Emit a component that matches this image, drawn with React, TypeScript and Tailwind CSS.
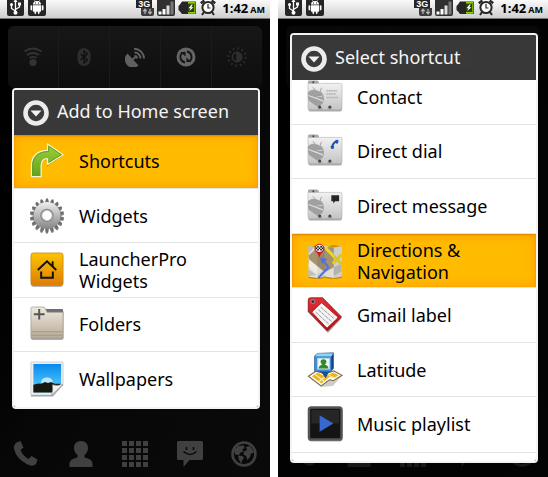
import type { ReactNode } from "react";

type Item = { label: string; icon: ReactNode; selected?: boolean };

/* ---------- status bar ---------- */

function UsbIcon() {
  return (
    <svg viewBox="0 0 17 16" className="h-4 w-[17px]" aria-hidden="true">
      <rect width="17" height="19" y="-3" rx="2" fill="#262626" />
      <g stroke="#fff" strokeWidth="1.300" fill="none">
        <path d="M8.500 0v13M8.500 11L4.500 8.500V5M8.500 9.500L12.500 7V4" />
      </g>
      <circle cx="8.500" cy="12.800" r="2" fill="#fff" />
      <circle cx="4.500" cy="4.600" r="1.500" fill="#fff" />
      <path d="M11 2.500h3v3h-3zM6.500 2L8.500-1l2 3z" fill="#fff" />
    </svg>
  );
}

function DroidIcon() {
  return (
    <svg viewBox="0 0 18 16" className="h-4 w-[18px]" aria-hidden="true">
      <rect width="18" height="19" y="-3" rx="2" fill="#262626" />
      <path d="M5 4.500a4 3.600 0 018 0zM4.800 5.300h8.400v5.500a1 1 0 01-1 1H5.800a1 1 0 01-1-1z" fill="#fff" />
      <path d="M3.300 6v3.600M14.700 6v3.600M7.300 11v2.200M10.700 11v2.200" stroke="#fff" strokeWidth="1.600" strokeLinecap="round" />
      <path d="M6.500.3l1 1.500M11.500.3l-1 1.500" stroke="#fff" strokeWidth=".7" />
      <path d="M7 3h1M10 3h1" stroke="#262626" />
    </svg>
  );
}

function NetworkIcon() {
  return (
    <span className="flex h-4 w-[18px] flex-col">
      <span className="h-2 w-4 bg-[#262626] text-center font-['Liberation_Sans',sans-serif] text-[9px] font-bold leading-[8px] text-white">3G</span>
      <svg viewBox="0 0 18 8" className="block h-2 w-[18px]" aria-hidden="true">
        <path d="M5 0h13v6a2 2 0 01-2 2H7a2 2 0 01-2-2z" fill="#3c3c3c" />
        <path d="M9 6V1.500M7.300 3.300L9 1.300l1.700 2M14 1v4.500M12.300 3.800l1.700 2 1.700-2" stroke="#bbb" strokeWidth="1.200" fill="none" />
      </svg>
    </span>
  );
}

function SignalIcon() {
  return (
    <svg viewBox="0 0 18 16" className="h-4 w-[18px]" aria-hidden="true">
      <rect width="18" height="19" y="-3" rx="2" fill="#303030" />
      <path d="M1.500 11.500h3v3h-3zM5.500 9h3v5.500h-3z" fill="#fff" />
      <path d="M9.500 5.500h3v9h-3z" fill="#ddd" />
      <path d="M13.500 1.500h3v13h-3z" fill="#777" />
    </svg>
  );
}

function BatteryIcon() {
  return (
    <svg viewBox="0 0 19 16" className="h-4 w-[19px]" aria-hidden="true">
      <path d="M4 1.500h14v12.500H4L2 11.500.5 10V6L2 4.500z" fill="#262626" />
      <path d="M10 1.800h7.500v2H10zM10 11.800h7.500v2H10z" fill="#8ccf0a" />
      <path d="M10 3.800h7.500v8H10z" fill="#2f3f14" />
      <path d="M16 3.800h1.500v8H16z" fill="#6fae05" />
      <path d="M13.500 4.500L10.500 8.200h2l-1.200 2.800L15.500 7.200h-2.200l1.500-2.700z" fill="#fff" />
    </svg>
  );
}

function AlarmIcon() {
  return (
    <svg viewBox="0 0 16 16" className="h-4 w-4" aria-hidden="true" fill="none" stroke="#262626">
      <circle cx="8" cy="7.500" r="5.600" strokeWidth="2" fill="#fff" />
      <path d="M8 4v4h2.500" strokeWidth="1.200" />
      <path d="M.8 3.300L4.300.5M15.200 3.300L11.700.5" strokeWidth="2.400" />
      <path d="M4 12l-2 3M12 12l2 3" strokeWidth="2" />
    </svg>
  );
}

function StatusBar() {
  return (
    <header className="flex h-[19px] shrink-0 items-start border-b border-[#777] bg-linear-to-b from-[#fafafa] to-[#cfcfcf] pl-[7px] pr-[5px] text-black">
      <div className="flex gap-1">
        <UsbIcon />
        <DroidIcon />
      </div>
      <div className="ml-auto flex gap-[3px]">
        <NetworkIcon />
        <SignalIcon />
        <BatteryIcon />
        <AlarmIcon />
        <time className="ml-[3px] flex items-baseline gap-[2px] font-['Open_Sans','Noto_Sans',sans-serif] text-[13px] font-bold leading-4">
          1:42<span className="text-[9px]">AM</span>
        </time>
      </div>
    </header>
  );
}

/* ---------- home screen ---------- */

const toggles: { label: string; tone: string; art: ReactNode }[] = [
  {
    label: "Wi-Fi",
    tone: "text-[#333]",
    art: (
      <g fill="none" stroke="currentColor" strokeWidth="1.800">
        <path d="M1.500 4.500q8.500-6 17 0M4 8q6-4 12 0M6.500 11q3.500-2.300 7 0" />
        <circle cx="10" cy="15.500" r="3.600" fill="currentColor" stroke="none" />
      </g>
    ),
  },
  {
    label: "Bluetooth",
    tone: "text-[#2e2e2e]",
    art: (
      <g>
        <rect x="3.500" y="1" width="13" height="18" rx="6.500" fill="currentColor" />
        <path d="M6.500 7l7 6-3.500 3V4l3.500 3-7 6" fill="none" stroke="#111" strokeWidth="1.400" />
      </g>
    ),
  },
  {
    label: "GPS",
    tone: "text-[#606060]",
    art: (
      <g fill="none" stroke="currentColor" strokeWidth="1.900">
        <path d="M2.500 6.500a8 8 0 0011 12z" fill="currentColor" stroke="none" />
        <path d="M9.500 9a2.500 2.500 0 012.500 2.500M9.500 5.500a6 6 0 016 6M9 1.800a9.800 9.800 0 0110 9.800M7.500 12.500l3-2.500" />
      </g>
    ),
  },
  {
    label: "Sync",
    tone: "text-[#666]",
    art: (
      <g>
        <circle cx="10" cy="10" r="9.500" fill="currentColor" />
        <path d="M9 15.500A5.700 5.700 0 016 6M11 4.500A5.700 5.700 0 0114 14" fill="none" stroke="#151515" strokeWidth="1.800" />
        <path d="M4.500 5h5v4.500zM15.500 15h-5v-4.500z" fill="#151515" />
      </g>
    ),
  },
  {
    label: "Brightness",
    tone: "text-[#2e2e2e]",
    art: (
      <g fill="none" stroke="currentColor" strokeWidth="1.600">
        <circle cx="10" cy="10" r="4.600" />
        <path d="M10 5.400a4.600 4.600 0 010 9.200z" fill="currentColor" />
        <circle cx="10" cy="10" r="8.600" strokeWidth="2.400" strokeDasharray="1.600 2.903" />
      </g>
    ),
  },
];

const dock: { label: string; art: ReactNode }[] = [
  {
    label: "Phone",
    art: <path d="M3.500 1.500l4-1.500 3 6.500-3 2.500q2.500 6 8 9l3-3 6 3.500-1.500 4.500q-3 3-8.500.5Q3.500 18 1 8 .5 3.500 3.500 1.500z" />,
  },
  {
    label: "Contacts",
    art: <path d="M13 0c4.500 0 7 3 7 7 0 3-1.500 5.500-3.500 7v2.500q8 1.500 8 6V26h-23v-3.500q0-4.500 8-6V14C7.500 12.500 6 10 6 7c0-4 2.500-7 7-7z" />,
  },
  {
    label: "Applications",
    art: <path d="M0 0h5v5H0zM7 0h5v5H7zM14 0h5v5h-5zM21 0h5v5h-5zM0 7h5v5H0zM7 7h5v5H7zM14 7h5v5h-5zM21 7h5v5h-5zM0 14h5v5H0zM7 14h5v5H7zM14 14h5v5h-5zM21 14h5v5h-5zM0 21h5v5H0zM7 21h5v5H7zM14 21h5v5h-5zM21 21h5v5h-5z" />,
  },
  {
    label: "Messages",
    art: (
      <g>
        <path d="M1.500 0h23a1.500 1.500 0 011.500 1.500v16a1.500 1.500 0 01-1.500 1.500H12.500L6.500 26v-7h-5A1.500 1.500 0 010 17.500v-16A1.500 1.500 0 011.500 0z" />
        <path d="M9.500 6v3M16.500 6v3M6.500 10.500q6.500 6 13 0" stroke="#0a0a0a" strokeWidth="1.600" fill="none" />
      </g>
    ),
  },
  {
    label: "Browser",
    art: (
      <g>
        <circle cx="13" cy="13" r="11.500" fill="none" stroke="currentColor" strokeWidth="2.600" />
        <path d="M3 9l4-4 6-.5.5 2.500-2.500 1.500 1.500 2-3 1-1.500 2.500-4-.5zM7 14.500l4.500.5 1.500 2-2 2.500-.5 3-2.500-3.500zM15 6l4-1 4 6-1.500 1.500L20 12l-1 4-2.500 3-1.500-4-2.500-1.500.5-3 3-1.500z" />
      </g>
    ),
  },
];

function HomeScreen({ faded }: { faded?: boolean }) {
  return (
    <div className={`flex flex-1 flex-col justify-between bg-linear-to-br from-black via-[#070707] to-[#0a0a0a] px-2 pb-[10px] pt-[7px] ${faded ? "opacity-40" : ""}`}>
      <div className="flex h-[62px] divide-x divide-[#1b1b1b] rounded-md bg-linear-to-b from-[#171717] to-[#0e0e0e]">
        {toggles.map((t) => (
          <button key={t.label} type="button" aria-label={t.label} className={`flex flex-1 items-center justify-center ${t.tone}`}>
            <svg viewBox="0 0 20 20" className="h-5 w-5" aria-hidden="true">{t.art}</svg>
          </button>
        ))}
      </div>
      <nav className="flex justify-between px-[5px] text-[#404040]">
        {dock.map((d) => (
          <button key={d.label} type="button" aria-label={d.label}>
            <svg viewBox="0 0 26 26" className="block h-[26px] w-[26px]" fill="currentColor" aria-hidden="true">{d.art}</svg>
          </button>
        ))}
      </nav>
    </div>
  );
}

/* ---------- list icons ---------- */

const shortcutIcon = (
  <g>
    <path d="M2.500 35V25C2.500 15 9 9 18 9V2.500L34 13 18 24v-6.500c-4 0-6.500 3-6.500 7.500v10z" fill="#8a5a00" opacity=".5" />
    <path d="M2 34.500V23C2 13 9 7.500 18.500 7.500V1L34.500 12 18.500 22v-6c-4.500 0-6.500 3-6.500 7.500v11z" fill="url(#leaf)" stroke="#f4f2d8" strokeWidth="1.300" strokeLinejoin="round" />
    <path d="M3.300 33.500V23C3.300 14 10 8.800 19.700 8.800V3.300L32.800 12l-13 8" stroke="#5c9c1c" strokeWidth=".9" fill="none" />
  </g>
);

const teeth = Array.from({ length: 18 }, (_, i) => i * 20);

const gearIcon = (
  <g>
    <g fill="#666" opacity=".8">
      {teeth.map((a) => (
        <path key={a} d="M16.300 6L17 1.800h2.200L19.800 6z" transform={`rotate(${a} 18 19.200)`} />
      ))}
    </g>
    <g fill="#6f6f6f">
      {teeth.map((a) => (
        <path key={a} d="M15.800 6L17 .5h2L20.200 6z" transform={`rotate(${a} 18 18)`} />
      ))}
    </g>
    <circle cx="18" cy="18" r="13.800" fill="url(#steel)" />
    <circle cx="18" cy="18" r="7" fill="#8b8b8b" />
    <circle cx="18" cy="18" r="5.200" fill="#fff" stroke="#c9c9c9" />
  </g>
);

const launcherIcon = (
  <g>
    <rect x="1.500" y="2" width="33" height="34" rx="2.500" fill="#888" opacity=".6" />
    <rect x="1.500" y="1" width="33" height="33.500" rx="2.500" fill="url(#amber)" stroke="#c9860f" strokeWidth=".8" />
    <path d="M8.500 18.500L18 9.500l9.500 9M23.800 9.500v5M12 20v6.500h12V20" fill="none" stroke="#111" strokeWidth="2" />
  </g>
);

const folderIcon = (
  <g>
    <path d="M2 3q0-1.500 1.500-1.500h12L18 5h16q1 0 1 1v27q0 2-2 2H3q-1.500 0-1.500-2z" fill="#777" opacity=".6" />
    <path d="M16 3h17.500q1 0 1 1v5H18z" fill="#6b6e78" />
    <path d="M1.500 2.500Q1.500 1 3 1h11q1.500 0 2.500 2l1.500 3.500h16.500V33H1.500z" fill="url(#sand)" stroke="#9d9789" strokeWidth=".7" />
    <path d="M2 26.500h32M2 30h32" stroke="#9c8f7b" strokeWidth=".8" />
    <path d="M10 3v11M4.500 8.500h11" stroke="#555" strokeWidth="2" />
  </g>
);

const wallpaperIcon = (
  <g>
    <path d="M1.500 2h33v23L24 36.500H1.500z" fill="#777" opacity=".7" />
    <path d="M1.500 1h33v23L23.500 35h-22z" fill="#eee" stroke="#bbb" strokeWidth=".6" />
    <path d="M4 3h28.500v20.500l-9 9H4z" fill="url(#sky)" />
    <ellipse cx="18" cy="21.500" rx="6" ry="4.500" fill="#e2faff" opacity=".75" />
    <path d="M4 24.500l5-1.500 3 .5 4-2 3 1 3-1 4 2 6.500 0-9 9H4z" fill="#17180f" />
    <path d="M22.500 35q2-4 1.200-10.500 5 1.500 10.800-.5z" fill="#f4f4f4" stroke="#999" strokeWidth=".7" />
  </g>
);

const card = (
  <g>
    <path d="M1 5.500q0-1.500 1.500-1.500h7q1.500 0 2 2H34q1.500 0 1.500 1.500V31q0 2.300-2 2.300H2.500Q1 33.300 1 31.500z" fill="#666" opacity=".55" />
    <path d="M.500 3Q.500 1.500 2 1.500h8q1.500 0 2 3H.500z" fill="#a9a9a9" />
    <path d="M.500 4.500H34q1.500 0 1.500 1.500V29.500q0 2-2 2H25.500l-1-2.500h-3l-1 2.500h-5l-1-2.500h-3l-1 2.500H2Q.500 31.500.500 29.500z" fill="url(#paper)" stroke="#b0b0b0" strokeWidth=".6" />
    <path d="M1 13.500Q4 11 8 11.500l-2.500-3M1 13.500v6L15 25.500q2.500-4 1-8.500-1-3-3-4.300l1.500-3.700" fill="none" stroke="#a0a0a0" strokeWidth="1" />
    <path d="M1 13.500Q4.500 11 9 11.500q5 .8 7 5.500L1 20z" fill="#a0a0a0" />
    <path d="M1 19.500l15-1.500q1 5-2 9l-4 1.500L1 22z" fill="#a0a0a0" />
    <path d="M1 17l15 5.500" stroke="#dedede" strokeWidth="1.200" />
    <circle cx="12.500" cy="28.800" r="1.600" fill="#444" />
    <circle cx="23" cy="28.800" r="1.600" fill="#444" />
    <circle cx="6" cy="3.400" r="1" fill="#444" />
  </g>
);

const contactIcon = (
  <g>
    {card}
    <path d="M19.500 12h11M19.500 15.500h10M19.500 19h12" stroke="#b3b3b3" strokeWidth="1.500" strokeDasharray="2 .5" />
  </g>
);

const dialIcon = (
  <g>
    {card}
    <path d="M25.500 15q0-5 5-6.500" fill="none" stroke="#2450b0" strokeWidth="2" />
    <path d="M23.800 13l3.700.3-.8 3.200h-2q-1-1.500-.9-3.500zM28.500 7.500q2-.7 3.300-.3l-.3 3.300-2 .5z" fill="#2450b0" />
  </g>
);

const messageIcon = (
  <g>
    {card}
    <path d="M24.500 7.500h8v6h-4l-2 2.500v-2.500h-2z" fill="#252525" />
  </g>
);

const mapIcon = (
  <g>
    <path d="M1 4l9-2 8 2 9-2 8.500 1.500V36l-8.500 1.500-9-1.500-8 1.500-9-1.500z" fill="#865c08" opacity=".45" />
    <path d="M1 3l9 1.500L18 3l9 1.500L35.500 3v31.500L27 36l-9-1.500-8 1.500-9-1.500z" fill="#e0ded7" />
    <path d="M1 13l9-8h8l9 11v9l-9 5L2 17zM22 4l5 .5v9L18 6z" fill="#a5926f" />
    <path d="M2 18l14 11-6 3-9-8z" fill="#efece4" />
    <path d="M1 3l6 1-6 7zM1 27l8 6-8 1z" fill="#bdbdb9" />
    <path d="M27 25l8-4v8l-8 5z" fill="#c2c0ba" />
    <path d="M18 4.500l17 17M35 12L26 21" stroke="#e8d62a" strokeWidth="3" />
    <path d="M10 4.500V36l8-1.500V3z" fill="#000" opacity=".07" />
    <path d="M27 4.500V36l8.500-1.500V3z" fill="#000" opacity=".07" />
    <path d="M11 36l10.500-11-5-7" stroke="#5271de" strokeWidth="2" fill="none" />
    <path d="M13 15l7.500 1.500-5.500 5z" fill="#5271de" />
    <path d="M12 15.500Q11.500 11 8.500 9 6 6 8 3q4-4.500 8.500 0 2 3-.5 6-3 2-4 6.500z" fill="#cf1722" />
    <circle cx="12.300" cy="5.500" r="3.800" fill="#eee" />
    <path d="M10 3h1.600v1.600H10zM13.200 3h1.600v1.600h-1.600zM11.600 4.600h1.600v1.600h-1.600zM10 6.200h1.600v1.600H10zM13.200 6.200h1.600v1.600h-1.600zM8.600 4.600H10v1.600H8.600zM14.800 4.600H16v1.600h-1.200z" fill="#111" />
  </g>
);

const labelIcon = (
  <g>
    <path d="M1 4l2-2 13-.5 19 20.500L21 37 1 16z" fill="#777" opacity=".6" />
    <path d="M.800 3Q.800.800 3 .800h12.500L35 20.500 20.500 35 .800 15z" fill="url(#ruby)" stroke="#8e1018" strokeWidth=".8" />
    <path d="M14.500 7l16 14-10.500 10L5.500 15.500z" fill="#f4f4f4" stroke="#fff" />
    <path d="M13.500 10.500L27 22M11 13l13.500 12M8.500 15.500L22 28" stroke="#999" strokeWidth="1" strokeDasharray="4 .7" />
    <circle cx="5.500" cy="4.800" r="2" fill="#333" stroke="#ddd" strokeWidth=".5" />
  </g>
);

const latitudeIcon = (
  <g>
    <path d="M14 36l12-1 9-10-10 3z" fill="#999" opacity=".5" />
    <path d="M1 25l8-5.500 9 3 9-3 8.500 4.500-9 5.500-3.500-1L14 35z" fill="#fff" stroke="#85714a" strokeWidth="1.200" />
    <path d="M4.500 25l6-4 7 4 9-4 5.500 3-5 3-4-1.500-8.500 7z" fill="#efb51c" />
    <path d="M8 23l9 7M22 24l6 3M12 30l7-5" stroke="#fff2b0" strokeWidth="1.200" />
    <path d="M7 4l3-3 17-.500V17l-3.500 3.500H22L18.500 27l-4-6-7.500-1z" fill="#173f83" />
    <path d="M7.500 4.500h17v15.500h-3.500L18.500 25l-3.300-5H7.500z" fill="#3f8ed8" />
    <path d="M7.500 4.500L10 1.300h16.500l-2 3.200z" fill="#8dd6f3" />
    <path d="M14.500 20h7L18.500 26z" fill="#1d4c9f" />
    <rect x="10.500" y="6.500" width="12" height="11" fill="#f4f8f0" stroke="#a9dcf5" />
    <path d="M16.500 7.500c4.500 0 3 4.500 1.500 5.500q3.500.8 3.500 4h-10q0-3.200 3.500-4c-1.500-1-3-5.500 1.500-5.500z" fill="#37872e" />
  </g>
);

const musicIcon = (
  <g>
    <rect x="1" y="2" width="35" height="34.500" rx="3" fill="#777" opacity=".6" />
    <rect x="1.500" y="1.500" width="33.500" height="33" rx="2.500" fill="#141414" stroke="#555" strokeWidth="2.500" />
    <rect x="4" y="4" width="28.500" height="14" fill="#262626" />
    <path d="M12.500 9.500L26.500 18l-14 8.500z" fill="#3867cf" />
  </g>
);

const ramps: [string, string, string][] = [
  ["leaf", "#9fd136", "#5fa31f"],
  ["steel", "#eeeeee", "#858585"],
  ["amber", "#fcc400", "#dd7c05"],
  ["sand", "#efeadf", "#b8ab97"],
  ["sky", "#0689ed", "#61d5ff"],
  ["paper", "#f1f1f1", "#c4c4c4"],
  ["ruby", "#df3038", "#b40f18"],
];

function Paints() {
  return (
    <svg className="absolute h-0 w-0" aria-hidden="true">
      <defs>
        {ramps.map(([id, from, to]) => (
          <linearGradient key={id} id={id} x1="0" y1="0" x2="0" y2="1">
            <stop stopColor={from} />
            <stop offset="1" stopColor={to} />
          </linearGradient>
        ))}
      </defs>
    </svg>
  );
}

/* ---------- dialog ---------- */

function ItemRow({ item }: { item: Item }) {
  return (
    <li className="flex flex-1 border-b border-[#e3e3e3] last:border-transparent">
      <button
        type="button"
        className={`flex flex-1 items-center gap-[14px] pl-[15px] pr-8 text-left text-[18px] leading-[22px] text-black ${
          item.selected ? "bg-[#ffbb00] shadow-[inset_0_0_12px_#ff9800,inset_0_1px_2px_#b87000]" : ""
        }`}
      >
        <svg viewBox="0 0 36 37" className="h-9 w-9 shrink-0" aria-hidden="true">{item.icon}</svg>
        <span>{item.label}</span>
      </button>
    </li>
  );
}

function Dialog({ title, items, scrolled }: { title: string; items: Item[]; scrolled?: boolean }) {
  return (
    <section role="dialog" aria-label={title} className="flex-1 overflow-hidden rounded-[4px] border-2 border-[#f4f4f4]">
      <h2 className="flex h-[45px] items-center gap-[7px] bg-[#3b3b3b]/95 pb-[2px] pl-2 text-[18px] leading-[22px] text-[#f5f5f5]">
        <svg viewBox="0 0 28 28" className="mt-1 h-7 w-7 shrink-0" aria-hidden="true">
          <circle cx="14" cy="14" r="10.500" fill="#3b3b3b" stroke="#ececec" strokeWidth="4.600" />
          <path d="M8.500 11.500h11L14 17.500z" fill="#f2f2f2" />
        </svg>
        {title}
      </h2>
      <div className={`overflow-hidden bg-white ${scrolled ? "h-[381px]" : ""}`}>
        <ul className={`flex flex-col ${scrolled ? "-mt-[10px] h-[382px]" : "h-[272px]"}`}>
          {items.map((item) => (
            <ItemRow key={item.label} item={item} />
          ))}
        </ul>
        {scrolled && <div className="h-3 border-t border-[#e3e3e3]" />}
      </div>
    </section>
  );
}

function Phone({ children, faded }: { children: ReactNode; faded?: boolean }) {
  return (
    <div className="flex flex-col bg-black">
      <StatusBar />
      <div className="relative flex flex-1 flex-col">
        <HomeScreen faded={faded} />
        <div className="absolute inset-0 flex items-center pl-3 pr-[10px]">{children}</div>
      </div>
    </div>
  );
}

const homeItems: Item[] = [
  { label: "Shortcuts", icon: shortcutIcon, selected: true },
  { label: "Widgets", icon: gearIcon },
  { label: "LauncherPro Widgets", icon: launcherIcon },
  { label: "Folders", icon: folderIcon },
  { label: "Wallpapers", icon: wallpaperIcon },
];

const shortcutItems: Item[] = [
  { label: "Contact", icon: contactIcon },
  { label: "Direct dial", icon: dialIcon },
  { label: "Direct message", icon: messageIcon },
  { label: "Directions & Navigation", icon: mapIcon, selected: true },
  { label: "Gmail label", icon: labelIcon },
  { label: "Latitude", icon: latitudeIcon },
  { label: "Music playlist", icon: musicIcon },
];

export default function App() {
  return (
    <main className="grid min-h-screen grid-cols-2 gap-2 bg-white font-['Noto_Sans',sans-serif]">
      <Paints />
      <Phone>
        <Dialog title="Add to Home screen" items={homeItems} />
      </Phone>
      <Phone faded>
        <Dialog title="Select shortcut" items={shortcutItems} scrolled />
      </Phone>
    </main>
  );
}
